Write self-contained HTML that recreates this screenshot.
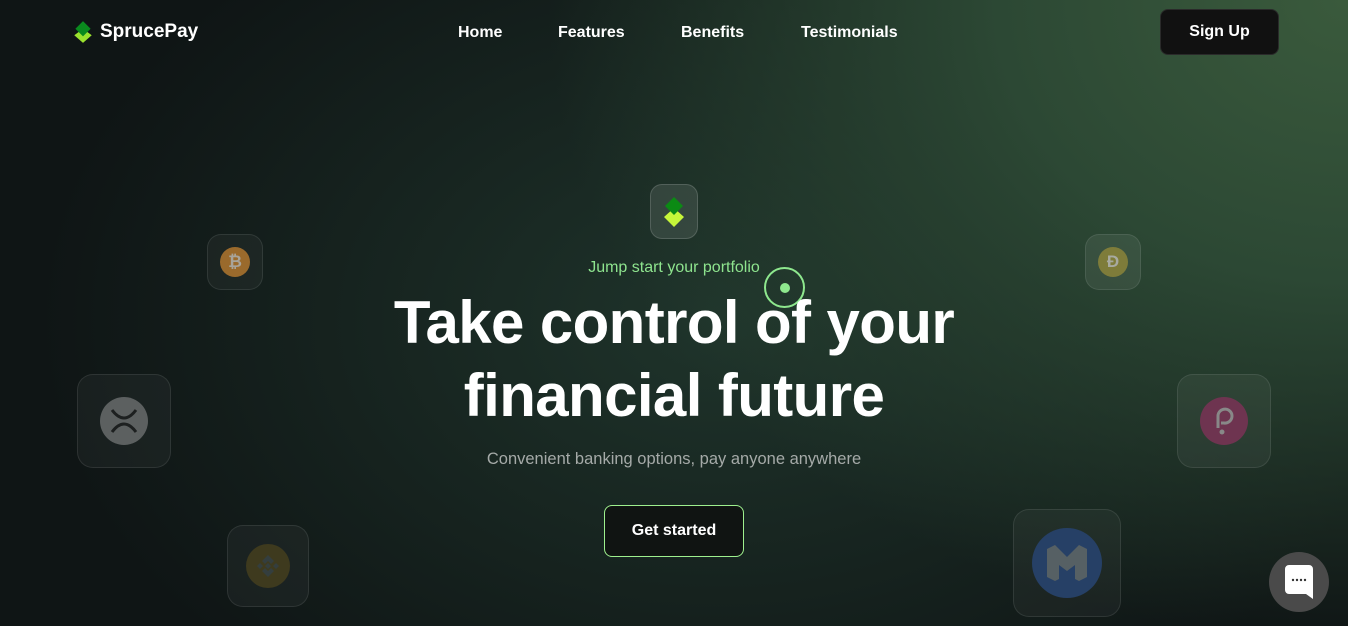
<!DOCTYPE html>
<html><head><meta charset="utf-8"><style>
*{margin:0;padding:0;box-sizing:border-box}
body{width:1348px;height:626px;overflow:hidden;font-family:"Liberation Sans",sans-serif;color:#fff;position:relative;
background:radial-gradient(ellipse 1000px 800px at 1348px 0px,#3a5a3c 0%,#2c4834 35%,rgba(26,40,34,0) 80%),radial-gradient(ellipse 800px 560px at 720px 320px,#1f342b 0%,rgba(18,28,26,0) 85%),#0f1515;}
.a{position:absolute}
.nav a{position:absolute;top:24px;font-size:16px;font-weight:bold;color:#fff}
.box{position:absolute;border:1px solid rgba(255,255,255,0.09);background:rgba(255,255,255,0.04);border-radius:14px;display:flex;align-items:center;justify-content:center}
.coin{border-radius:50%;display:flex;align-items:center;justify-content:center;font-weight:bold}
</style></head><body>
<div class="a" style="left:72px;top:20px">
<svg width="22" height="24" viewBox="0 0 20 22"><path d="M10 8 L18 14 L10 21 L2 14Z" fill="#9be22e"/><path d="M10 1 L17 8 L10 15 L3 8Z" fill="#0a8a1e"/></svg></div>
<div class="a" style="left:100px;top:21px;font-size:19px;font-weight:bold">SprucePay</div>
<div class="nav"><a style="left:458px">Home</a><a style="left:558px">Features</a><a style="left:681px">Benefits</a><a style="left:801px">Testimonials</a></div>
<div class="a" style="left:1160px;top:9px;width:119px;height:46px;background:#111;border:1px solid #2a2a2a;border-radius:8px;font-size:16px;font-weight:bold;display:flex;align-items:center;justify-content:center">Sign Up</div>

<div class="box" style="left:650px;top:184px;width:48px;height:55px;border-radius:12px;background:rgba(255,255,255,0.1);border-color:rgba(255,255,255,0.15)">
<svg width="26" height="32" viewBox="0 0 26 32"><path d="M13 12 L23 21 L13 31 L3 21Z" fill="#c6f63a"/><path d="M13 1 L22 10 L13 19 L4 10Z" fill="#0b8a14"/></svg></div>
<div class="a" style="left:0;width:1348px;top:259px;text-align:center;font-size:16px;color:#8ee48e">Jump start your portfolio</div>
<div class="a" style="left:764px;top:267px;width:41px;height:41px;border:2px solid #8ee88e;border-radius:50%"></div>
<div class="a" style="left:780px;top:283px;width:10px;height:10px;background:#8ee88e;border-radius:50%"></div>
<div class="a" style="left:0;width:1348px;top:286px;text-align:center;font-size:60px;font-weight:bold;line-height:73px;letter-spacing:-0.6px">Take control of your<br>financial future</div>
<div class="a" style="left:0;width:1348px;top:450px;text-align:center;font-size:16.5px;color:#a5aaa8">Convenient banking options, pay anyone anywhere</div>
<div class="a" style="left:604px;top:505px;width:140px;height:52px;border:1px solid #9ef08e;border-radius:8px;background:#101412;font-size:16px;font-weight:bold;display:flex;align-items:center;justify-content:center">Get started</div>

<div class="box" style="left:207px;top:234px;width:56px;height:56px"><div class="coin" style="width:30px;height:30px;background:#9a6a2c;font-size:17px;color:#a8a49a">₿</div></div>
<div class="box" style="left:77px;top:374px;width:94px;height:94px;border-radius:16px"><div class="coin" style="width:48px;height:48px;background:#5c6060"><svg width="30" height="26" viewBox="0 0 30 26"><path d="M3 2 Q15 18 27 2 M3 24 Q15 8 27 24" fill="none" stroke="#1d2020" stroke-width="3"/></svg></div></div>
<div class="box" style="left:227px;top:525px;width:82px;height:82px;border-radius:16px"><div class="coin" style="width:44px;height:44px;background:#3e3a1e"><svg width="28" height="28" viewBox="0 0 28 28"><path d="M14 3 L20 9 L17 12 L14 9 L11 12 L8 9Z M14 25 L20 19 L17 16 L14 19 L11 16 L8 19Z M3 14 L6 11 L9 14 L6 17Z M25 14 L22 11 L19 14 L22 17Z M14 11 L17 14 L14 17 L11 14Z" fill="#343e3e"/></svg></div></div>
<div class="box" style="left:1085px;top:234px;width:56px;height:56px;background:rgba(255,255,255,0.07)"><div class="coin" style="width:30px;height:30px;background:#7e7c3a;font-size:17px;color:#a8aaa0">Đ</div></div>
<div class="box" style="left:1177px;top:374px;width:94px;height:94px;border-radius:16px;background:rgba(255,255,255,0.05)"><div class="coin" style="width:48px;height:48px;background:#6e3450"><svg width="24" height="34" viewBox="0 0 24 34"><path d="M6 24 L6 12 A7 7 0 1 1 12 19 L9 19" fill="none" stroke="#888" stroke-width="3"/><circle cx="10" cy="28" r="2.5" fill="#888"/></svg></div></div>
<div class="box" style="left:1013px;top:509px;width:108px;height:108px;border-radius:16px"><div class="coin" style="width:70px;height:70px;background:#264066"><svg width="44" height="36" viewBox="0 0 44 36"><path d="M2 4 L10 0 L22 12 L34 0 L42 4 L42 32 L34 36 L30 34 L30 20 L22 26 L14 20 L14 34 L10 36 L2 32Z" fill="#566064"/></svg></div></div>

<div class="a" style="left:1269px;top:552px;width:60px;height:60px;border-radius:50%;background:#4a4a4a;display:flex;align-items:center;justify-content:center">
<svg width="28" height="34" viewBox="0 0 28 34"><path d="M4 0 H24 A4 4 0 0 1 28 4 V34 L21 29 H4 A4 4 0 0 1 0 25 V4 A4 4 0 0 1 4 0Z" fill="#fff"/><circle cx="8" cy="15" r="1.2" fill="#333"/><circle cx="12" cy="15" r="1.2" fill="#333"/><circle cx="16" cy="15" r="1.2" fill="#333"/><circle cx="20" cy="15" r="1.2" fill="#333"/></svg></div>
</body></html>
